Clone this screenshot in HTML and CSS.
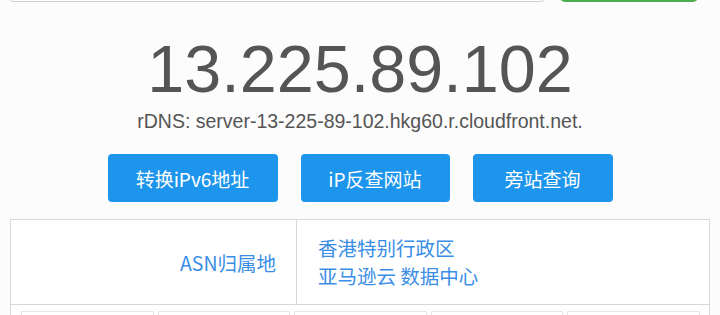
FILE: index.html
```html
<!DOCTYPE html>
<html lang="zh-CN">
<head>
<meta charset="utf-8">
<title>13.225.89.102</title>
<link rel="stylesheet" href="styles.css">
</head>
<body>
<div class="page">
  <div class="search">
    <div class="search-input"></div>
    <div class="search-btn"></div>
  </div>
  <h1 class="ip">13.225.89.102</h1>
  <p class="rdns">rDNS: server-13-225-89-102.hkg60.r.cloudfront.net.</p>
  <div class="actions">
    <a class="btn">转换iPv6地址</a>
    <a class="btn">iP反查网站</a>
    <a class="btn">旁站查询</a>
  </div>
  <table class="info">
    <tr>
      <th class="label">ASN归属地</th>
      <td class="value">香港特别行政区<br>亚马逊云 数据中心</td>
    </tr>
    <tr>
      <td colspan="2" class="boxes-cell">
        <div class="boxes">
          <span class="box"></span><span class="box"></span><span class="box"></span><span class="box"></span><span class="box"></span>
        </div>
      </td>
    </tr>
  </table>
</div>
</body>
</html>
```
FILE: styles.css
```css
html, body {
  margin: 0;
  padding: 0;
  background: #fcfcfc;
  font-family: "Liberation Sans", Arial, "Noto Sans CJK SC", sans-serif;
  overflow: hidden;
}
.page {
  width: 700px;
  margin: 0 auto;
  padding: 0 10px;
}
.search {
  display: flex;
  align-items: flex-end;
  margin-top: -34px;
  height: 36px;
}
.search-input {
  width: 534px;
  height: 34px;
  border: 1px solid #cfcfcf;
  border-radius: 3px;
  background: #fff;
  box-sizing: border-box;
}
.search-btn {
  width: 138px;
  height: 36px;
  margin-left: 16px;
  background: #4cae4f;
  border-radius: 5px;
}
.ip {
  margin: 0;
  padding-top: 30px;
  text-align: center;
  font-weight: normal;
  font-size: 66.5px;
  line-height: 74px;
  color: #555;
}
.rdns {
  margin: 3px 0 0;
  text-align: center;
  font-size: 19.5px;
  line-height: 24px;
  color: #555;
}
.actions {
  display: flex;
  justify-content: center;
  gap: 23px;
  margin-top: 21px;
}
.btn {
  display: flex;
  align-items: center;
  justify-content: center;
  height: 48px;
  background: #1e95ec;
  color: #fff;
  border-radius: 4px;
  font-family: "Noto Sans CJK SC", sans-serif;
  font-size: 19px;
}
.btn:nth-child(1) { width: 170px; }
.btn:nth-child(2) { width: 149px; }
.btn:nth-child(3) { width: 140px; }
.info {
  width: 700px;
  margin-top: 17px;
  border-collapse: collapse;
  background: #fff;
}
.info th, .info td {
  border: 1px solid #d8d8d8;
  padding: 0;
}
.label {
  width: 265px;
  height: 84px;
  text-align: right;
  padding-right: 20px !important;
  font-weight: normal;
  font-family: "Noto Sans CJK SC", sans-serif;
  font-size: 19.5px;
  color: #3a8ee6;
}
.value {
  padding-left: 21px !important;
  font-family: "Noto Sans CJK SC", sans-serif;
  font-size: 19.5px;
  line-height: 28px;
  color: #3a8ee6;
}
.boxes-cell {
  padding: 6px 9px 0 10px !important;
}
.boxes {
  display: flex;
  gap: 4px;
}
.box {
  flex: 1;
  height: 30px;
  border: 1px solid #e6e6e6;
  background: #fff;
}
```
